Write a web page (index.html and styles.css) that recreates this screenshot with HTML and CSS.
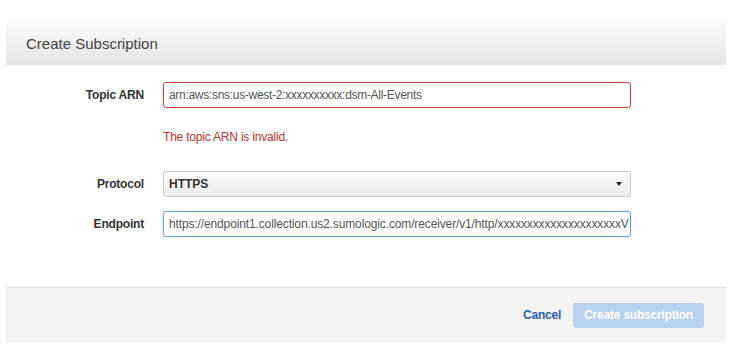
FILE: index.html
```html
<!DOCTYPE html>
<html lang="en">
<head>
    <meta charset="UTF-8">
    <meta name="viewport" content="width=device-width, initial-scale=1.0">
    <title>Create Subscription</title>
    <link rel="stylesheet" href="styles.css">
</head>
<body>
    <div class="dialog">
        <div class="dialog-header">
            <h2>Create Subscription</h2>
        </div>

        <div class="dialog-body">
            <div class="form-row">
                <label for="topic-arn">Topic ARN</label>
                <input type="text" id="topic-arn" class="field invalid" value="arn:aws:sns:us-west-2:xxxxxxxxxx:dsm-All-Events">
            </div>
            <div class="form-row">
                <span></span>
                <p class="error">The topic ARN is invalid.</p>
            </div>
            <div class="form-row protocol-row">
                <label>Protocol</label>
                <div class="select">
                    <span>HTTPS</span>
                    <span class="caret"></span>
                </div>
            </div>
            <div class="form-row">
                <label for="endpoint">Endpoint</label>
                <div class="field focused">https://endpoint1.collection.us2.sumologic.com/receiver/v1/http/xxxxxxxxxxxxxxxxxxxxxV</div>
            </div>
        </div>

        <div class="dialog-footer">
            <a href="#" class="cancel">Cancel</a>
            <button class="primary" disabled>Create subscription</button>
        </div>
    </div>
</body>
</html>
```

FILE: styles.css
```css
/* General Styling */
body {
    margin: 0;
    background-color: #fff;
    font-family: "Liberation Sans", Arial, sans-serif;
    color: #333;
}

.dialog {
    margin: 22px 5px 0 6px;
    width: 720px;
}

/* Header */
.dialog-header {
    height: 43px;
    padding-left: 20px;
    display: flex;
    align-items: center;
    background: linear-gradient(to bottom, #fbfbfb, #e4e4e4);
}

.dialog-header h2 {
    margin: 0;
    font-size: 15px;
    font-weight: normal;
    color: #444;
}

/* Form */
.dialog-body {
    padding: 17px 0 50px 0;
}

.form-row {
    display: grid;
    grid-template-columns: 138px 468px;
    column-gap: 19px;
    align-items: center;
}

.form-row label {
    text-align: right;
    font-size: 12px;
    font-weight: bold;
    color: #333;
    letter-spacing: -0.2px;
}

.field {
    box-sizing: border-box;
    height: 26px;
    width: 468px;
    padding: 0 5px;
    border: 1px solid #ccc;
    border-radius: 3px;
    font-family: "Liberation Sans", Arial, sans-serif;
    font-size: 12px;
    color: #555;
    background-color: #fff;
    letter-spacing: -0.3px;
}

.field.invalid {
    border-color: #c9423c; /* Red for invalid */
}

.field.focused {
    border-color: #6aa3dc; /* Blue focus ring */
    padding: 0 1px 0 5px;
    line-height: 24px;
    white-space: nowrap;
    overflow: hidden;
    letter-spacing: -0.13px;
    box-shadow: 0 0 2px rgba(82, 150, 220, 0.4);
}

.error {
    margin: 0;
    padding: 22px 0 0 0;
    height: 63px;
    box-sizing: border-box;
    font-size: 12px;
    color: #b7332c;
    letter-spacing: -0.2px;
}

.protocol-row {
    margin-bottom: 14px;
}

.select {
    box-sizing: border-box;
    height: 26px;
    padding: 0 8px 0 5px;
    display: flex;
    align-items: center;
    justify-content: space-between;
    border: 1px solid #c8c8c8;
    border-radius: 3px;
    background: linear-gradient(to bottom, #fbfbfb, #ececec);
    font-size: 12px;
    font-weight: bold;
    color: #333;
}

.caret {
    width: 0;
    height: 0;
    border-left: 3px solid transparent;
    border-right: 3px solid transparent;
    border-top: 4px solid #222;
}

/* Footer */
.dialog-footer {
    box-sizing: border-box;
    height: 56px;
    border-top: 1px solid #e2e2e2;
    background-color: #f3f3f3;
    display: flex;
    align-items: center;
    justify-content: flex-end;
    padding-right: 22px;
    padding-bottom: 1px;
}

.cancel {
    font-size: 12px;
    font-weight: bold;
    color: #2a5db0;
    text-decoration: none;
    margin-right: 12px;
    letter-spacing: -0.2px;
}

.primary {
    height: 25px;
    padding: 0 11px;
    border: none;
    border-radius: 3px;
    background-color: #b8d1ec;
    color: #fff;
    font-family: "Liberation Sans", Arial, sans-serif;
    font-size: 12px;
    font-weight: bold;
    letter-spacing: -0.2px;
}
```
